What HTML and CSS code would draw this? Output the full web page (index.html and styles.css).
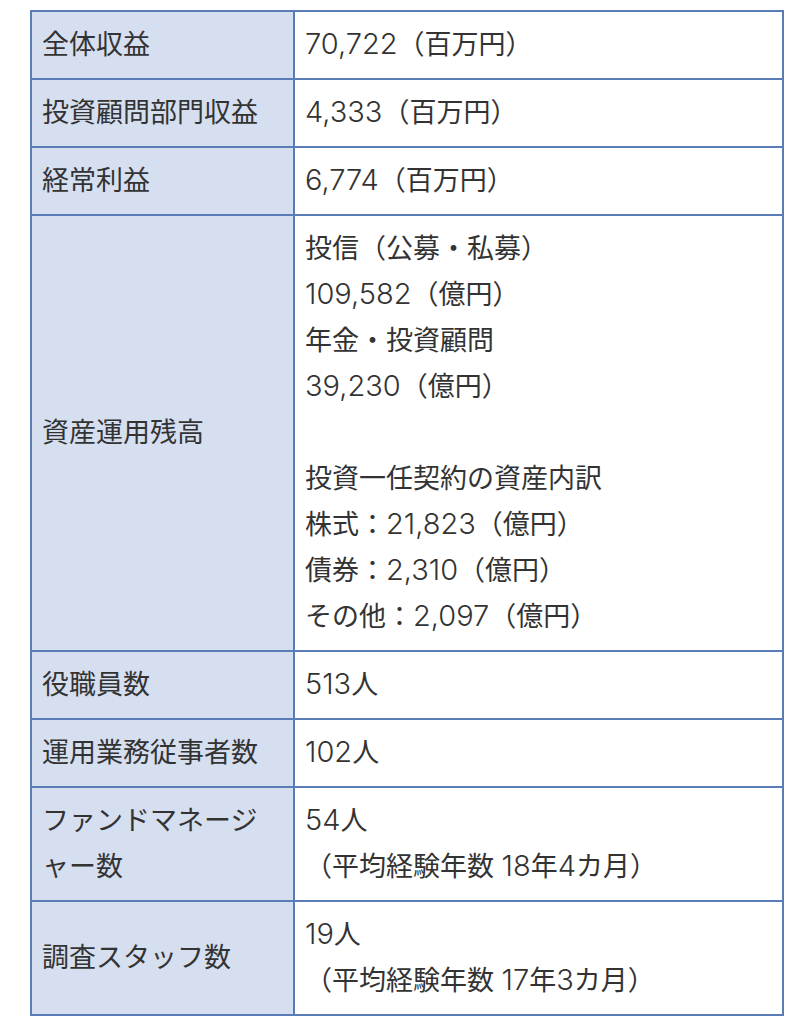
FILE: index.html
```html
<!DOCTYPE html>
<html lang="ja">
<head>
<meta charset="utf-8">
<link rel="stylesheet" href="styles.css">
</head>
<body>
<div class="wrap">
<table class="info">
<tr><th>全体収益</th><td><span class="num">70,722</span>（百万円）</td></tr>
<tr><th>投資顧問部門収益</th><td><span class="num">4,333</span>（百万円）</td></tr>
<tr><th>経常利益</th><td><span class="num">6,774</span>（百万円）</td></tr>
<tr><th>資産運用残高</th><td>投信（公募・私募）<br><span class="num">109,582</span>（億円）<br>年金・投資顧問<br><span class="num">39,230</span>（億円）<br><br>投資一任契約の資産内訳<br>株式：<span class="num">21,823</span>（億円）<br>債券：<span class="num">2,310</span>（億円）<br>その他：<span class="num">2,097</span>（億円）</td></tr>
<tr><th>役職員数</th><td><span class="num">513</span>人</td></tr>
<tr><th>運用業務従事者数</th><td><span class="num">102</span>人</td></tr>
<tr><th>ファンドマネージャー数</th><td><span class="num">54</span>人<br>（平均経験年数 <span class="num">18</span>年<span class="num">4</span>カ月）</td></tr>
<tr><th>調査スタッフ数</th><td><span class="num">19</span>人<br>（平均経験年数 <span class="num">17</span>年<span class="num">3</span>カ月）</td></tr>
</table>
</div>
</body>
</html>
```

FILE: styles.css
```css
html, body {
  margin: 0;
  padding: 0;
  background: #ffffff;
}
.wrap {
  padding: 10px 0 0 30px;
}
.info {
  border-collapse: collapse;
  width: 754px;
  font-family: Inter, "Noto Sans CJK JP", sans-serif;
  font-size: 27px;
  line-height: 46px;
  color: #333333;
}
.info th, .info td {
  border: 2px solid #5b7db6;
  padding: 10px 10px;
  text-align: left;
  font-weight: normal;
}
.info th {
  width: 241px;
  background: #d6dff0;
  vertical-align: middle;
}
.info td {
  background: #ffffff;
  vertical-align: top;
}
.num {
  font-size: 29px;
  line-height: 1;
  font-weight: 300;
}
```
